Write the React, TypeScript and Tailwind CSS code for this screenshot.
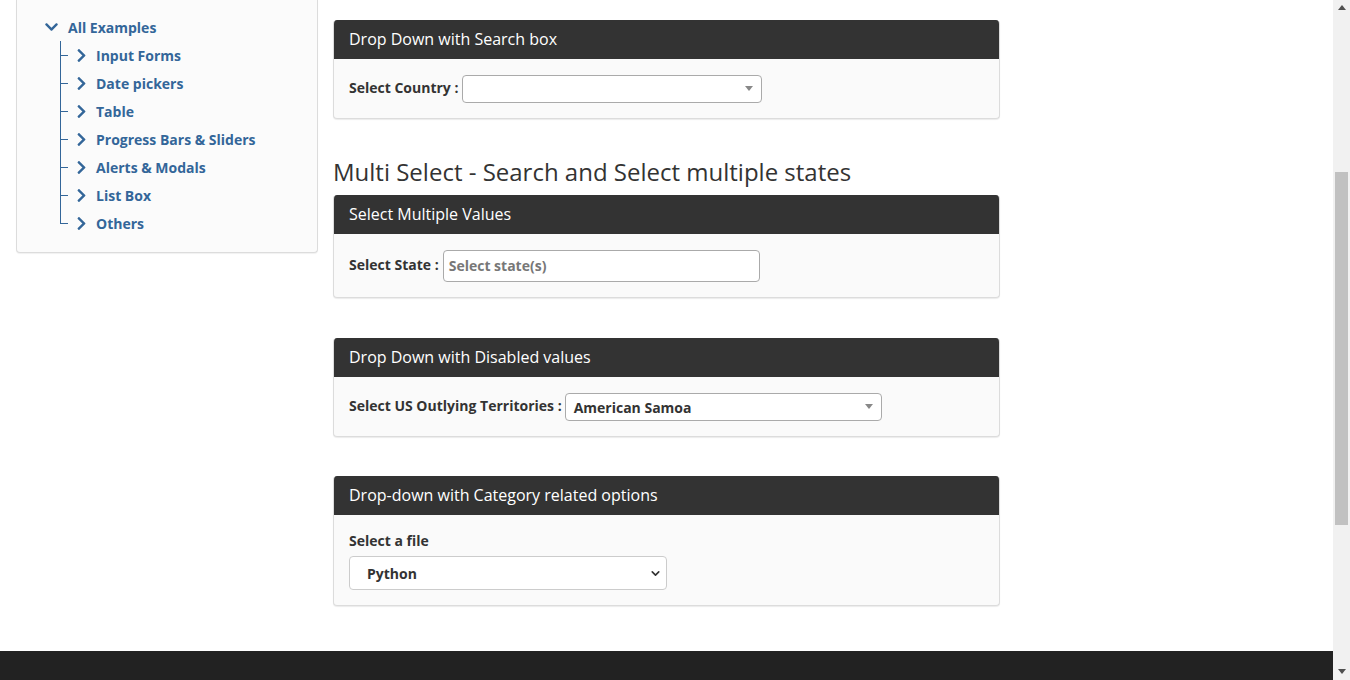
import { ChevronDown } from "lucide-react";

const LINKS = [
  "Input Forms",
  "Date pickers",
  "Table",
  "Progress Bars & Sliders",
  "Alerts & Modals",
  "List Box",
  "Others",
];

// font-awesome style solid chevrons
function FaDown() {
  return (
    <svg width="13" height="8" viewBox="0 122 448 268" className="shrink-0" fill="currentColor">
      <path d="M207.029 381.476L12.686 187.132c-9.373-9.373-9.373-24.569 0-33.941l22.667-22.667c9.357-9.357 24.522-9.375 33.901-.04L224 284.505l154.745-154.021c9.379-9.335 24.544-9.317 33.901.04l22.667 22.667c9.373 9.373 9.373 24.569 0 33.941L240.971 381.476c-9.373 9.372-24.569 9.372-33.942 0z" />
    </svg>
  );
}

function FaRight() {
  return (
    <svg width="9" height="13" viewBox="25 38 270 436" className="shrink-0" fill="currentColor">
      <path d="M285.476 272.971L91.132 467.314c-9.373 9.373-24.569 9.373-33.941 0l-22.667-22.667c-9.357-9.357-9.375-24.522-.04-33.901L188.505 256 34.484 101.255c-9.335-9.379-9.317-24.544.04-33.901l22.667-22.667c9.373-9.373 24.569-9.373 33.941 0L285.475 239.03c9.373 9.372 9.373 24.568.001 33.941z" />
    </svg>
  );
}

function Caret() {
  return (
    <svg width="8" height="5" viewBox="0 0 8 5" className="shrink-0">
      <path d="M0 0h8L4 5z" fill="#888" />
    </svg>
  );
}

function Card({ title, children, bodyClass }: { title: string; children: React.ReactNode; bodyClass: string }) {
  return (
    <div className="rounded border border-t-0 border-[#dcdcdc] bg-[#fafafa] shadow-[0_1px_1px_rgba(0,0,0,0.08)] overflow-hidden">
      <div className="h-[39px] bg-[#333] flex items-center px-[15px] pb-[1px] text-white text-[16px]">{title}</div>
      <div className={bodyClass}>{children}</div>
    </div>
  );
}

function Sidebar() {
  return (
    <aside className="w-[302px] ml-4 shrink-0">
      <div className="border border-t-0 border-[#dcdcdc] rounded-b bg-[#fbfbfb] pt-[13px] pb-[15px] pl-[28px] shadow-[0_1px_1px_rgba(0,0,0,0.06)]">
        {/* root node */}
        <div className="h-[28px] flex items-center gap-[10px] text-[#336699] font-bold text-[14px]">
          <FaDown />
          <span>All Examples</span>
        </div>
        <ul className="ml-[15px]">
          {LINKS.map((l, i) => (
            <li key={l} className="relative h-[28px] flex items-center pl-[17px] text-[#336699] font-bold text-[14px]">
              <span
                className={
                  i === LINKS.length - 1
                    ? "absolute left-0 top-0 h-[15px] w-px bg-[#336699]"
                    : "absolute left-0 top-0 h-[28px] w-px bg-[#336699]"
                }
              />
              <span className="absolute left-0 top-[14px] w-[8px] h-px bg-[#336699]" />
              <span className="mr-[10px] flex"><FaRight /></span>
              <span>{l}</span>
            </li>
          ))}
        </ul>
      </div>
    </aside>
  );
}

export default function App() {
  return (
    <div className="flex h-[680px] overflow-hidden bg-white text-[#333]" style={{ fontFamily: '"Open Sans", sans-serif' }}>
      <div className="w-[1333px] flex flex-col">
        <div className="flex h-[651px]">
          <Sidebar />
          <main className="ml-[15px] w-[667px] pt-[20px] flex flex-col">
            <Card title="Drop Down with Search box" bodyClass="h-[59px] px-[15px] flex items-center gap-[4px]">
              <span className="font-bold text-[14px] pb-[2px]">Select Country :</span>
              <div className="w-[300px] h-[28px] bg-white border border-[#aaa] rounded flex items-center justify-end pr-[8px]">
                <Caret />
              </div>
            </Card>

            <h2 className="text-[24px] leading-[34px] mt-[36px] mb-[6px] font-normal">Multi Select - Search and Select multiple states</h2>

            <Card title="Select Multiple Values" bodyClass="h-[63px] px-[15px] flex items-center gap-[4px]">
              <span className="font-bold text-[14px] pb-[3px]">Select State :</span>
              <div className="w-[317px] h-[32px] bg-white border border-[#aaa] rounded flex items-center pl-[5px] text-[14px] font-bold text-[#777]">
                Select state(s)
              </div>
            </Card>

            <div className="h-[40px] shrink-0" />

            <Card title="Drop Down with Disabled values" bodyClass="h-[59px] px-[15px] flex items-center gap-[3px]">
              <span className="font-bold text-[14px] pb-[2px]">Select US Outlying Territories :</span>
              <div className="w-[317px] h-[28px] bg-white border border-[#aaa] rounded flex items-center justify-between pl-[8px] pr-[8px] text-[14px] font-bold text-[#333]">
                <span className="pt-[1px]">American Samoa</span>
                <Caret />
              </div>
            </Card>

            <div className="h-[39px] shrink-0" />

            <Card title="Drop-down with Category related options" bodyClass="h-[90px] px-[15px] pt-[16px]">
              <div className="font-bold text-[14px] leading-[20px]">Select a file</div>
              <div className="mt-[5px] w-[318px] h-[34px] bg-white border border-[#ccc] rounded flex items-center justify-between pl-[17px] pr-[4px] text-[14px] font-bold text-[#333]">
                <span>Python</span>
                <ChevronDown className="w-[13px] h-[13px] text-[#333]" strokeWidth={3} />
              </div>
            </Card>
          </main>
        </div>
        <footer className="flex-1 bg-[#222]" />
      </div>

      {/* scrollbar */}
      <div className="w-[17px] bg-[#f1f1f1] flex flex-col items-center">
        <svg width="8" height="5" viewBox="0 0 8 5" className="mt-[5px]">
          <path d="M0 5h8L4 0z" fill="#505050" />
        </svg>
        <div className="mt-[162px] w-[13px] h-[353px] bg-[#c1c1c1]" />
        <div className="flex-1" />
        <svg width="8" height="5" viewBox="0 0 8 5" className="mb-[6px]">
          <path d="M0 0h8L4 5z" fill="#505050" />
        </svg>
      </div>
    </div>
  );
}
